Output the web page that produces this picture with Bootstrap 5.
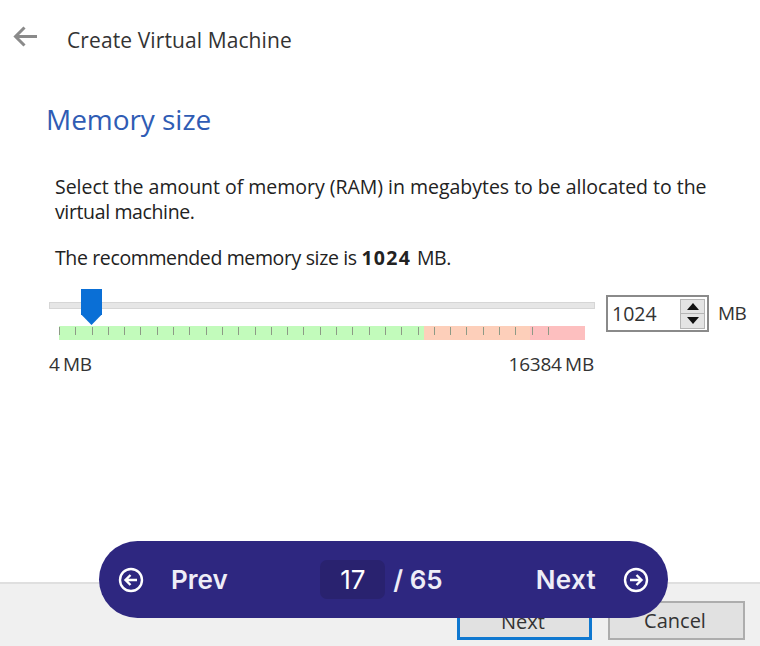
<!DOCTYPE html>
<html lang="en">
<head>
  <meta charset="UTF-8"/>
  <meta name="viewport" content="width=device-width, initial-scale=1.0"/>
  <title>Create Virtual Machine</title>
  <link href="https://cdn.jsdelivr.net/npm/bootstrap@5.3.0/dist/css/bootstrap.min.css" rel="stylesheet"/>
  <style>
    html, body { height: 100%; overflow: hidden; }
    body { font-family: "Open Sans", "Noto Sans", sans-serif; color: #222; background: #fff; }
    .wiz-page { height: 646px; position: relative; }
    .wiz-head { padding: 22px 0 0 13px; height: 99px; gap: 29px; }
    .wiz-title { font-size: 21px; line-height: 36px; color: #333; letter-spacing: .1px; }
    .wiz-body { padding: 0 0 0 46px; }
    .wiz-h { font-size: 28px; line-height: 40px; color: #2f5cb4; font-weight: 400; margin: 0 0 35px; letter-spacing: -.05px; }
    .wiz-text { font-size: 19.5px; line-height: 25px; margin: 0 0 21px 9px; letter-spacing: -.02px; width: 665px; }
    .wiz-text-tight { letter-spacing: -.37px; }
    .wiz-text-tight b { letter-spacing: 1.3px; margin-right: 1px; }
    .mem-row { gap: 11px; margin: -2px 0 0 3px; }
    .mem-slider { width: 546px; position: relative; height: 88px; flex: none; }
    .mem-track { position: absolute; left: 0; right: 0; top: 13px; height: 7px; background: #e6e6e6; border: 1px solid #d6d6d6; }
    .mem-thumb { position: absolute; left: 32px; top: 0; width: 21px; height: 36px; background: #0a6fd6; clip-path: polygon(0 0, 100% 0, 100% 70%, 50% 100%, 0 70%); }
    .mem-scale { position: absolute; left: 10px; top: 37px; width: 526px; height: 14px; display: flex; }
    .mem-scale > div { height: 100%; }
    .sc-green { width: 365px; background: #c2fbbb; }
    .sc-orange { width: 106px; background: #fdcfba; }
    .sc-red { width: 55px; background: #fdbfbf; }
    .mem-ticks { position: absolute; left: 10px; top: 38px; width: 505px; height: 8px; background: repeating-linear-gradient(90deg, #8d9a86 0 1px, transparent 1px 16.3px); }
    .mem-labels { position: absolute; left: 0; right: 1px; top: 61px; font-size: 19px; line-height: 28px; letter-spacing: -.2px; word-spacing: -1.5px; color: #333; }
    .mem-spin { flex: none; width: 103px; height: 37px; border: 2px solid #8a8a8a; font-size: 19.5px; padding-left: 4px; margin-top: 6px; color: #333; }
    .spin-btns { width: 25px; height: 30px; margin-right: 2px; background: #e4e4e4; border: 1px solid #b5b5b5; }
    .spin-btns > div { flex: 1; }
    .spin-btns > div + div { border-top: 1px solid #b5b5b5; }
    .mem-unit { flex: none; font-size: 19px; margin-top: 10px; margin-left: -2px; letter-spacing: -.7px; color: #333; }
    .wiz-foot { position: absolute; left: 0; right: 0; bottom: 0; height: 64px; background: #f0f0f0; border-top: 2px solid #dfdfdf; padding: 17px 15px 6px 0; gap: 16px; }
    .wiz-btn { height: 39px; width: 137px; font-size: 20px; line-height: 35px; text-align: center; background: #e1e1e1; border: 2px solid #adadad; color: #333; padding: 0 3px 0 0; border-radius: 0; letter-spacing: 0; }
    .wiz-btn-main { width: 135px; border: 3px solid #0f78d0; }
    .pager-pill { position: absolute; left: 99px; top: 541px; width: 569px; height: 77px; border-radius: 38.5px; background: #2e2780; color: #eeedf7; padding: 0 19px; font-family: Inter, sans-serif; font-weight: 600; font-size: 26px; }
    .pager-link { gap: 27px; }
    .pager-prev { width: 128px; }
    .pager-next { width: 132px; gap: 27px; letter-spacing: .3px; }
    .pager-mid { gap: 8px; }
    .pager-num { width: 65px; height: 39px; background: #29226f; border-radius: 7px; font-weight: 400; text-align: center; line-height: 39px; color: #fff; }
  </style>
</head>
<body>

<div class="wiz-page d-flex flex-column">
  <!-- titulo -->
  <div class="wiz-head d-flex align-items-start">
    <svg width="25" height="36" viewBox="0 0 25 36" fill="none" stroke="#8a8a8a" stroke-width="3"><path d="M24 14.500H3M11.500 5.500L2.500 14.500L11.500 23.500"/></svg>
    <div class="wiz-title">Create Virtual Machine</div>
  </div>

  <div class="wiz-body">
    <h1 class="wiz-h">Memory size</h1>
    <p class="wiz-text">Select the amount of memory (RAM) in megabytes to be allocated to the<br/><span class="wiz-text-tight">virtual machine.</span></p>
    <p class="wiz-text wiz-text-tight">The recommended memory size is <b>1024</b> MB.</p>

    <div class="mem-row d-flex align-items-start">
      <div class="mem-slider">
        <div class="mem-track"></div>
        <div class="mem-scale"><div class="sc-green"></div><div class="sc-orange"></div><div class="sc-red"></div></div>
        <div class="mem-ticks"></div>
        <div class="mem-thumb"></div>
        <div class="mem-labels d-flex justify-content-between"><span>4 MB</span><span>16384 MB</span></div>
      </div>
      <div class="mem-spin d-flex align-items-center justify-content-between">
        <span>1024</span>
        <div class="spin-btns d-flex flex-column">
          <div class="d-flex align-items-center justify-content-center"><svg width="12" height="7" viewBox="0 0 12 7"><path d="M6 0L12 7H0Z" fill="#111"/></svg></div>
          <div class="d-flex align-items-center justify-content-center"><svg width="12" height="7" viewBox="0 0 12 7"><path d="M0 0H12L6 7Z" fill="#111"/></svg></div>
        </div>
      </div>
      <div class="mem-unit">MB</div>
    </div>
  </div>

  <!-- botones -->
  <div class="wiz-foot d-flex justify-content-end align-items-start">
    <button class="btn wiz-btn wiz-btn-main">Next</button>
    <button class="btn wiz-btn">Cancel</button>
  </div>

  <!-- paginador -->
  <div class="pager-pill d-flex align-items-center justify-content-between">
    <div class="pager-link pager-prev d-flex align-items-center">
      <svg width="26" height="26" viewBox="0 0 26 26" fill="none" stroke="#fff" stroke-width="2.400"><circle cx="13" cy="13" r="11"/><path d="M19 13H7.500M12.500 8L7.500 13L12.500 18"/></svg>
      <span>Prev</span>
    </div>
    <div class="pager-mid d-flex align-items-center">
      <div class="pager-num">17</div>
      <span>/ 65</span>
    </div>
    <div class="pager-link pager-next d-flex align-items-center justify-content-end">
      <span>Next</span>
      <svg width="26" height="26" viewBox="0 0 26 26" fill="none" stroke="#fff" stroke-width="2.400"><circle cx="13" cy="13" r="11"/><path d="M7 13H18.500M13.500 8L18.500 13L13.500 18"/></svg>
    </div>
  </div>
</div>

<script src="https://cdn.jsdelivr.net/npm/bootstrap@5.3.0/dist/js/bootstrap.bundle.min.js"></script>
</body>
</html>
